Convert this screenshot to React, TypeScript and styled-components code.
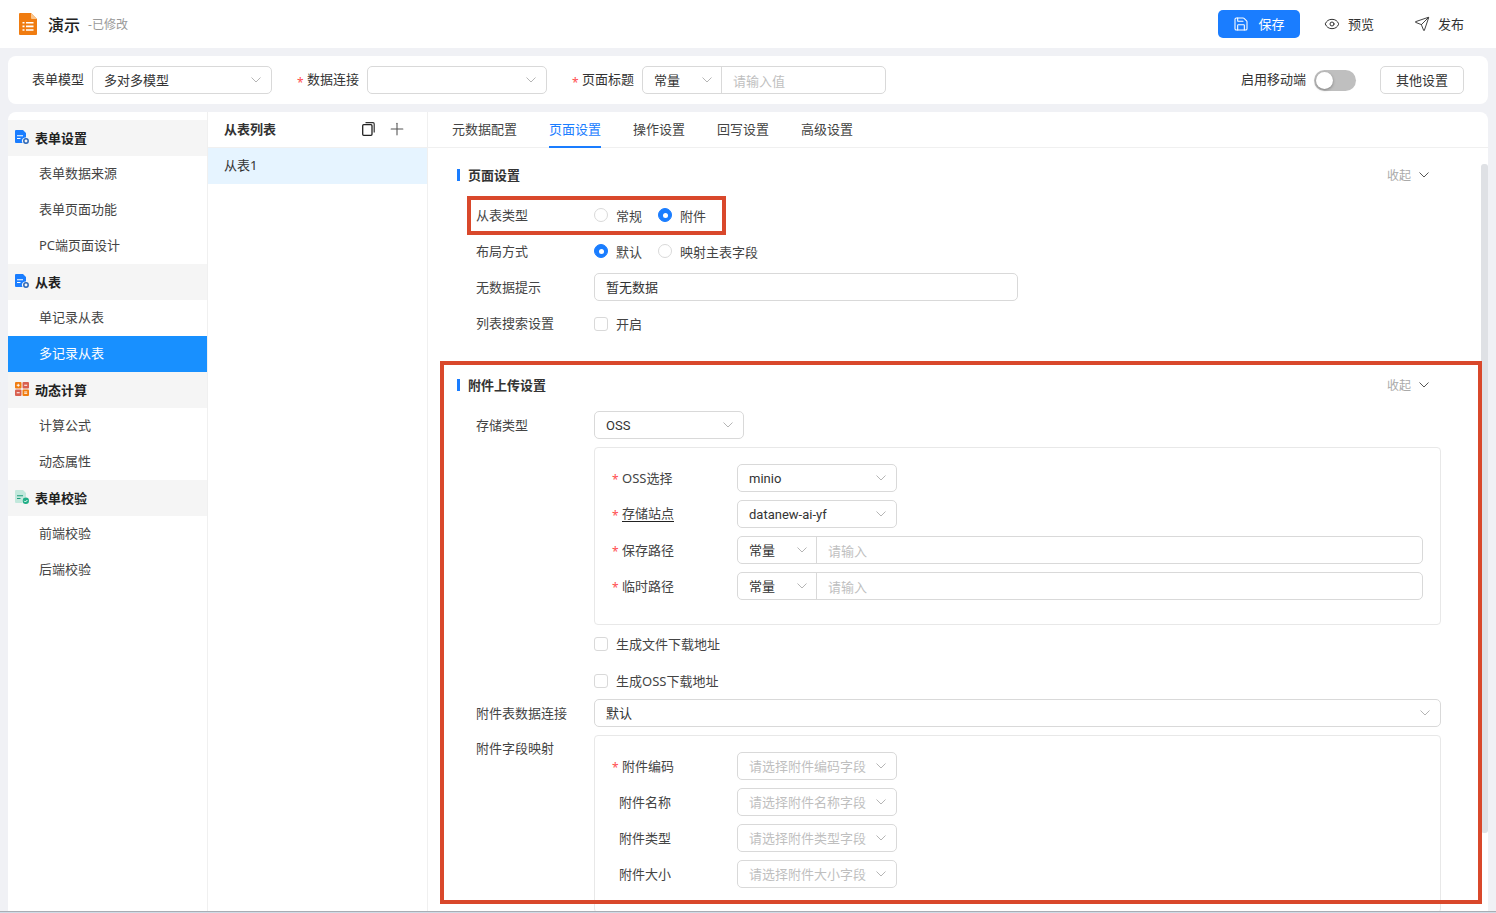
import * as React from "react";
import styled, {createGlobalStyle} from "styled-components";
import {Eye, Plus, Save, Send} from "lucide-react";

const Global = createGlobalStyle`
  html, body {
    margin: 0;
    padding: 0;
    height: 913px;
    overflow: hidden;
    background: #f0f1f5;
    color: #333;
    font-family: "Noto Sans", "Noto Sans CJK SC", sans-serif;
    font-size: 13px;
  }
  * { box-sizing: border-box; }
`
const Page = styled.div`
  position: relative;
  width: 1496px;
  height: 913px;
  display: flex;
  flex-flow: column nowrap;
  overflow: hidden;
`
const Header = styled.header`
  height: 48px;
  flex: none;
  background: #fff;
  display: flex;
  align-items: center;
  padding: 0 16px 0 19px;
`
const AppName = styled.span`
  font-size: 16px;
  font-weight: 500;
  color: #222;
  margin-left: 11px;
`
const Modified = styled.span`
  font-size: 12px;
  color: #999;
  margin-left: 8px;
`
const HeaderActions = styled.div`
  margin-left: auto;
  display: flex;
  align-items: center;
`
const ActionText = styled.span`
  padding-bottom: 2px;
`
const SaveButton = styled.div`
  width: 82px;
  height: 28px;
  background: #1a7dff;
  color: #fff;
  border-radius: 5px;
  display: flex;
  align-items: center;
  justify-content: center;
  gap: 9px;
  margin-right: 24px;
`
const HeaderAction = styled.div`
  display: flex;
  align-items: center;
  gap: 8px;
  color: #333;
  margin-right: ${p => p.$gap || 0}px;
`
const Toolbar = styled.div`
  height: 48px;
  flex: none;
  margin: 8px 8px 8px;
  padding: 0 24px;
  background: #fff;
  border-radius: 8px;
  display: flex;
  align-items: center;
`
const ToolLabel = styled.span`
  white-space: nowrap;
  margin-right: 8px;
  color: #333;
  padding-bottom: 4px;
  margin-left: ${p => p.$push ? "auto" : "0"};
`
const Star = styled.span`
  color: #ff4d4f;
  font-size: 12px;
  width: 10px;
  flex: none;
  line-height: 1;
  transform: translateY(3px);
`
const Field = styled.div`
  width: ${p => p.$w ? p.$w + "px" : "100%"};
  height: 28px;
  flex: none;
  border: 1px solid #d9d9d9;
  border-radius: 5px;
  background: #fff;
  display: flex;
  align-items: center;
  padding: 0 10px 0 11px;
  margin-right: ${p => p.$mr || 0}px;
  color: #333;
`
const FieldText = styled.span`
  flex: 1;
  white-space: nowrap;
  color: ${p => p.$muted ? "#bfbfbf" : "#333"};
  padding-bottom: ${p => p.$raise ? 2 : 0}px;
  font-family: ${p => p.$latin ? `Roboto, "Noto Sans", sans-serif` : "inherit"};
`
const Group = styled.div`
  width: ${p => p.$w ? p.$w + "px" : "100%"};
  height: 28px;
  flex: none;
  display: flex;
  border: 1px solid #d9d9d9;
  border-radius: 5px;
  background: #fff;
`
const GroupSelect = styled.div`
  width: 79px;
  flex: none;
  display: flex;
  align-items: center;
  padding: 0 9px 0 11px;
  border-right: 1px solid #d9d9d9;
`
const GroupInput = styled.div`
  flex: 1;
  display: flex;
  align-items: center;
  padding-left: 11px;
`
const Switch = styled.div`
  width: 42px;
  height: 21px;
  background: #bfbfbf;
  border-radius: 11px;
  padding: 2px;
  margin: 0 24px 0 0;
`
const Knob = styled.div`
  width: 17px;
  height: 17px;
  border-radius: 50%;
  background: #fff;
  box-shadow: 0 1px 3px rgba(0,0,0,.35);
`
const PlainButton = styled.div`
  width: 84px;
  height: 28px;
  padding-bottom: 2px;
  border: 1px solid #d9d9d9;
  border-radius: 5px;
  display: flex;
  align-items: center;
  justify-content: center;
`
const Main = styled.div`
  flex: 1;
  min-height: 0;
  margin: 0 8px;
  background: #fff;
  border-radius: 8px 8px 0 0;
  display: flex;
  overflow: hidden;
`
const BottomLine = styled.div`
  height: 2px;
  flex: none;
  background: #a9adb3;
  border-bottom: 1px solid #cfdbe6;
`
const Sidebar = styled.nav`
  width: 200px;
  flex: none;
  padding-top: 8px;
  border-right: 1px solid #f0f0f0;
`
const SideGroup = styled.div`
  height: 36px;
  background: #f5f5f5;
  display: flex;
  align-items: center;
  padding: 0 0 2px 7px;
  gap: 6px;
  font-weight: 700;
  color: #222;
`
const SideItem = styled.div`
  height: 36px;
  line-height: 35px;
  padding-left: 31px;
  background: ${p => p.$active ? "#1890ff" : "#fff"};
  color: ${p => p.$active ? "#fff" : "#444"};
`
const ListPanel = styled.div`
  width: 220px;
  flex: none;
  border-right: 1px solid #f0f0f0;
`
const ListHead = styled.div`
  height: 36px;
  display: flex;
  align-items: center;
  padding: 0 20px 2px 16px;
  border-bottom: 1px solid #f0f0f0;
  font-weight: 700;
  color: #333;
`
const ListTools = styled.div`
  margin-left: auto;
  display: flex;
  align-items: center;
  gap: 12px;
`
const ListRow = styled.div`
  height: 36px;
  line-height: 34px;
  padding-left: 16px;
  background: #e6f4ff;
`
const Content = styled.div`
  flex: 1;
  min-width: 0;
  overflow: hidden;
`
const Tabs = styled.div`
  height: 36px;
  display: flex;
  gap: 32px;
  padding-left: 24px;
  border-bottom: 1px solid #f0f0f0;
`
const Tab = styled.div`
  height: 36px;
  line-height: 35px;
  color: ${p => p.$active ? "#1a7dff" : "#444"};
  border-bottom: 2px solid ${p => p.$active ? "#1a7dff" : "transparent"};
`
const Section = styled.section`
  padding: ${p => p.$top}px 47px 0 48px;
`
const SectionHead = styled.div`
  height: 24px;
  margin: 0 12px 10px -19px;
  display: flex;
  align-items: center;
`
const TitleBar = styled.i`
  width: 3px;
  height: 12px;
  background: #1a7dff;
  margin-right: 8px;
`
const SectionTitle = styled.span`
  font-weight: 700;
  color: #333;
  padding-bottom: 2px;
`
const Collapse = styled.div`
  margin-left: auto;
  display: flex;
  align-items: center;
  gap: 8px;
  color: #aaa;
  font-size: 12px;
`
const Row = styled.div`
  display: grid;
  grid-template-columns: 118px 1fr;
  align-items: ${p => p.$top ? "start" : "center"};
  min-height: ${p => p.$h || 36}px;
  height: ${p => p.$top ? "auto" : (p.$h || 36) + "px"};
  margin-top: ${p => p.$mt || 0}px;
`
const RowLabel = styled.label`
  color: #444;
  line-height: ${p => p.$top ? "36px" : "normal"};
  padding-bottom: ${p => p.$top ? 0 : 2}px;
`
const Options = styled.div`
  display: flex;
  align-items: center;
  gap: 16px;
`
const Option = styled.div`
  display: flex;
  align-items: center;
  gap: 8px;
  color: #444;
`
const Radio = styled.span`
  width: 14px;
  height: 14px;
  flex: none;
  border-radius: 50%;
  background: ${p => p.$on ? "#1a7dff" : "#fff"};
  border: 1px solid ${p => p.$on ? "#1a7dff" : "#d9d9d9"};
  display: flex;
  align-items: center;
  justify-content: center;
  &::after {
    content: "";
    width: 5px;
    height: 5px;
    border-radius: 50%;
    background: ${p => p.$on ? "#fff" : "transparent"};
  }
`
const Check = styled.span`
  width: 14px;
  height: 14px;
  flex: none;
  margin-top: 1px;
  border: 1px solid #d9d9d9;
  border-radius: 3px;
  background: #fff;
`
const Inset = styled.div`
  border: 1px solid #e8e8e8;
  border-radius: 4px;
  padding: 12px 17px 20px 17px;
  margin-top: ${p => p.$mt || 0}px;
`
const InsetRow = styled.div`
  height: 36px;
  display: grid;
  grid-template-columns: 125px 1fr;
  align-items: center;
`
const InsetLabel = styled.div`
  display: flex;
  align-items: center;
  color: #444;
  padding: 0 0 2px ${p => p.$plain ? 7 : 0}px;
`
const Dotted = styled.span`
  border-bottom: 1px solid #222;
  line-height: 16px;
`
const Annotation = styled.div`
  position: absolute;
  left: ${p => p.$x}px;
  top: ${p => p.$y}px;
  width: ${p => p.$w}px;
  height: ${p => p.$h}px;
  border: 4px solid #d9482b;
  pointer-events: none;
`
const ScrollThumb = styled.div`
  position: absolute;
  left: 1481px;
  top: 164px;
  width: 7px;
  height: 669px;
  background: #dfe1e5;
  border-radius: 3px;
`

const Chevron = ({color = "#b5b5b5"}: { color?: string }) => (
    <svg width="10" height="6" viewBox="0 0 10 6" fill="none" style={{flex: "none"}}>
        <path d="M0.5 0.5L5 5L9.5 0.5" stroke={color} strokeWidth="1"/>
    </svg>
)

const SheetIcon = () => (
    <svg width="18" height="22" viewBox="0 0 18 22">
        <path d="M1 0h11l6 6v15a1 1 0 0 1-1 1H1a1 1 0 0 1-1-1V1a1 1 0 0 1 1-1z" fill="#f07c10"/>
        <path d="M12 0l6 6h-5a1 1 0 0 1-1-1z" fill="#f9c48c"/>
        <path d="M3.5 9h2v1.6h-2zM7 9h7.5v1.6H7zM3.5 12.6h2v1.6h-2zM7 12.6h7.5v1.6H7zM3.5 16.2h2v1.6h-2zM7 16.2h7.5v1.6H7z" fill="#fff"/>
    </svg>
)
const DocIcon = () => (
    <svg width="14" height="14" viewBox="0 0 14 14">
        <path d="M0 1a1 1 0 0 1 1-1h7l3 3v4.5a3.5 3.5 0 0 0-3.5 5.5H1a1 1 0 0 1-1-1z" fill="#1a7dff"/>
        <path d="M2 5.2h6v1H2zM2 8h3.5v1H2z" fill="#fff"/>
        <circle cx="11" cy="11" r="2.2" fill="none" stroke="#2a66b8" strokeWidth="1.5"/>
    </svg>
)
const CalcIcon = () => (
    <svg width="14" height="14" viewBox="0 0 14 14">
        <rect x="0" y="0" width="6.5" height="6.5" rx="1" fill="#f07c10"/>
        <rect x="7.5" y="0" width="6.5" height="6.5" rx="1" fill="#d9604f"/>
        <rect x="0" y="7.5" width="6.5" height="6.5" rx="1" fill="#d9604f"/>
        <rect x="7.5" y="7.5" width="6.5" height="6.5" rx="1" fill="#f07c10"/>
        <path d="M1.7 2.8h3v.9h-3zM2.8 1.7h.9v3h-.9zM9.2 2.8h3v.9h-3zM1.7 10.3h3v.9h-3zM9.2 9.6h3v.8h-3zM9.2 11h3v.8h-3z" fill="#fff"/>
    </svg>
)
const CheckDocIcon = () => (
    <svg width="14" height="14" viewBox="0 0 14 14">
        <path d="M0 1a1 1 0 0 1 1-1h7l3 3v4.5a3.5 3.5 0 0 0-3.5 5.5H1a1 1 0 0 1-1-1z" fill="#c2e8dc"/>
        <path d="M2 5.2h6v1H2zM2 8h3.5v1H2z" fill="#1f9d7c"/>
        <circle cx="10.8" cy="10.8" r="3.2" fill="#1fae86"/>
        <path d="M9.2 10.8l1.2 1.2 2-2" fill="none" stroke="#fff" strokeWidth="1"/>
    </svg>
)
const CopyIcon = () => (
    <svg width="13" height="14" viewBox="0 0 13 14" fill="none">
        <rect x="0.7" y="2.7" width="9.3" height="10.6" rx="1" stroke="#222" strokeWidth="1.3"/>
        <path d="M3.5 0.7h7.5a1.2 1.2 0 0 1 1.2 1.2v8.6" stroke="#333" strokeWidth="1.2"/>
    </svg>
)

const isCjk = (s: string) => /[^\x00-\x7f]/.test(s)

const Select = ({w, value, placeholder, mr}: { w?: number, value?: string, placeholder?: string, mr?: number }) => {
    const text = value || placeholder || ""
    return (
        <Field $w={w} $mr={mr}>
            <FieldText $muted={!value} $raise={isCjk(text)} $latin={!!text && !isCjk(text)}>{text}</FieldText>
            <Chevron/>
        </Field>
    )
}
const ConstInput = ({w, placeholder}: { w?: number, placeholder: string }) => (
    <Group $w={w}>
        <GroupSelect>
            <FieldText $raise>常量</FieldText>
            <Chevron/>
        </GroupSelect>
        <GroupInput><FieldText $muted>{placeholder}</FieldText></GroupInput>
    </Group>
)
const SectionHeader = ({title}: { title: string }) => (
    <SectionHead>
        <TitleBar/>
        <SectionTitle>{title}</SectionTitle>
        <Collapse>收起 <Chevron color="#555"/></Collapse>
    </SectionHead>
)

const attachFields = [
    {label: "附件编码", holder: "请选择附件编码字段", required: true},
    {label: "附件名称", holder: "请选择附件名称字段"},
    {label: "附件类型", holder: "请选择附件类型字段"},
    {label: "附件大小", holder: "请选择附件大小字段"},
]

export default function App() {
    return (
        <Page>
            <Global/>
            <Header>
                <SheetIcon/>
                <AppName>演示</AppName>
                <Modified>-已修改</Modified>
                <HeaderActions>
                    <SaveButton><Save size={16} strokeWidth={1.6}/><ActionText>保存</ActionText></SaveButton>
                    <HeaderAction $gap={40}><Eye size={16} strokeWidth={1.5}/><ActionText>预览</ActionText></HeaderAction>
                    <HeaderAction $gap={16}><Send size={16} strokeWidth={1.4}/><ActionText>发布</ActionText></HeaderAction>
                </HeaderActions>
            </Header>
            <Toolbar>
                <ToolLabel>表单模型</ToolLabel>
                <Select w={180} value="多对多模型" mr={25}/>
                <Star>*</Star>
                <ToolLabel>数据连接</ToolLabel>
                <Select w={180} placeholder="" mr={25}/>
                <Star>*</Star>
                <ToolLabel>页面标题</ToolLabel>
                <ConstInput w={244} placeholder="请输入值"/>
                <ToolLabel $push>启用移动端</ToolLabel>
                <Switch><Knob/></Switch>
                <PlainButton>其他设置</PlainButton>
            </Toolbar>
            <Main>
                <Sidebar>
                    <SideGroup><DocIcon/>表单设置</SideGroup>
                    <SideItem>表单数据来源</SideItem>
                    <SideItem>表单页面功能</SideItem>
                    <SideItem>PC端页面设计</SideItem>
                    <SideGroup><DocIcon/>从表</SideGroup>
                    <SideItem>单记录从表</SideItem>
                    <SideItem $active>多记录从表</SideItem>
                    <SideGroup><CalcIcon/>动态计算</SideGroup>
                    <SideItem>计算公式</SideItem>
                    <SideItem>动态属性</SideItem>
                    <SideGroup><CheckDocIcon/>表单校验</SideGroup>
                    <SideItem>前端校验</SideItem>
                    <SideItem>后端校验</SideItem>
                </Sidebar>
                <ListPanel>
                    <ListHead>
                        从表列表
                        <ListTools>
                            <CopyIcon/>
                            <Plus size={20} color="#555" strokeWidth={1.3}/>
                        </ListTools>
                    </ListHead>
                    <ListRow>从表1</ListRow>
                </ListPanel>
                <Content>
                    <Tabs>
                        <Tab>元数据配置</Tab>
                        <Tab $active>页面设置</Tab>
                        <Tab>操作设置</Tab>
                        <Tab>回写设置</Tab>
                        <Tab>高级设置</Tab>
                    </Tabs>
                    <Section $top={15}>
                        <SectionHeader title="页面设置"/>
                        <Row>
                            <RowLabel>从表类型</RowLabel>
                            <Options>
                                <Option><Radio/>常规</Option>
                                <Option><Radio $on/>附件</Option>
                            </Options>
                        </Row>
                        <Row>
                            <RowLabel>布局方式</RowLabel>
                            <Options>
                                <Option><Radio $on/>默认</Option>
                                <Option><Radio/>映射主表字段</Option>
                            </Options>
                        </Row>
                        <Row>
                            <RowLabel>无数据提示</RowLabel>
                            <Field $w={424}><FieldText $raise>暂无数据</FieldText></Field>
                        </Row>
                        <Row>
                            <RowLabel>列表搜索设置</RowLabel>
                            <Option><Check/>开启</Option>
                        </Row>
                    </Section>
                    <Section $top={32}>
                        <SectionHeader title="附件上传设置"/>
                        <Row>
                            <RowLabel>存储类型</RowLabel>
                            <Select w={150} value="OSS"/>
                        </Row>
                        <Row $top>
                            <span/>
                            <Inset $mt={4}>
                                <InsetRow>
                                    <InsetLabel><Star>*</Star>OSS选择</InsetLabel>
                                    <Select w={160} value="minio"/>
                                </InsetRow>
                                <InsetRow>
                                    <InsetLabel><Star>*</Star><Dotted>存储站点</Dotted></InsetLabel>
                                    <Select w={160} value="datanew-ai-yf"/>
                                </InsetRow>
                                <InsetRow>
                                    <InsetLabel><Star>*</Star>保存路径</InsetLabel>
                                    <ConstInput placeholder="请输入"/>
                                </InsetRow>
                                <InsetRow>
                                    <InsetLabel><Star>*</Star>临时路径</InsetLabel>
                                    <ConstInput placeholder="请输入"/>
                                </InsetRow>
                            </Inset>
                        </Row>
                        <Row>
                            <span/>
                            <Option><Check/>生成文件下载地址</Option>
                        </Row>
                        <Row $mt={1}>
                            <span/>
                            <Option><Check/>生成OSS下载地址</Option>
                        </Row>
                        <Row $h={28} $mt={1}>
                            <RowLabel>附件表数据连接</RowLabel>
                            <Select value="默认"/>
                        </Row>
                        <Row $top $mt={3}>
                            <RowLabel $top>附件字段映射</RowLabel>
                            <Inset $mt={5}>
                                {attachFields.map(f => (
                                    <InsetRow key={f.label}>
                                        <InsetLabel $plain={!f.required}>
                                            {f.required && <Star>*</Star>}
                                            {f.label}
                                        </InsetLabel>
                                        <Select w={160} placeholder={f.holder}/>
                                    </InsetRow>
                                ))}
                            </Inset>
                        </Row>
                    </Section>
                </Content>
            </Main>
            <BottomLine/>
            <ScrollThumb/>
            <Annotation $x={467} $y={196} $w={259} $h={39}/>
            <Annotation $x={440} $y={361} $w={1042} $h={543}/>
        </Page>
    )
}
